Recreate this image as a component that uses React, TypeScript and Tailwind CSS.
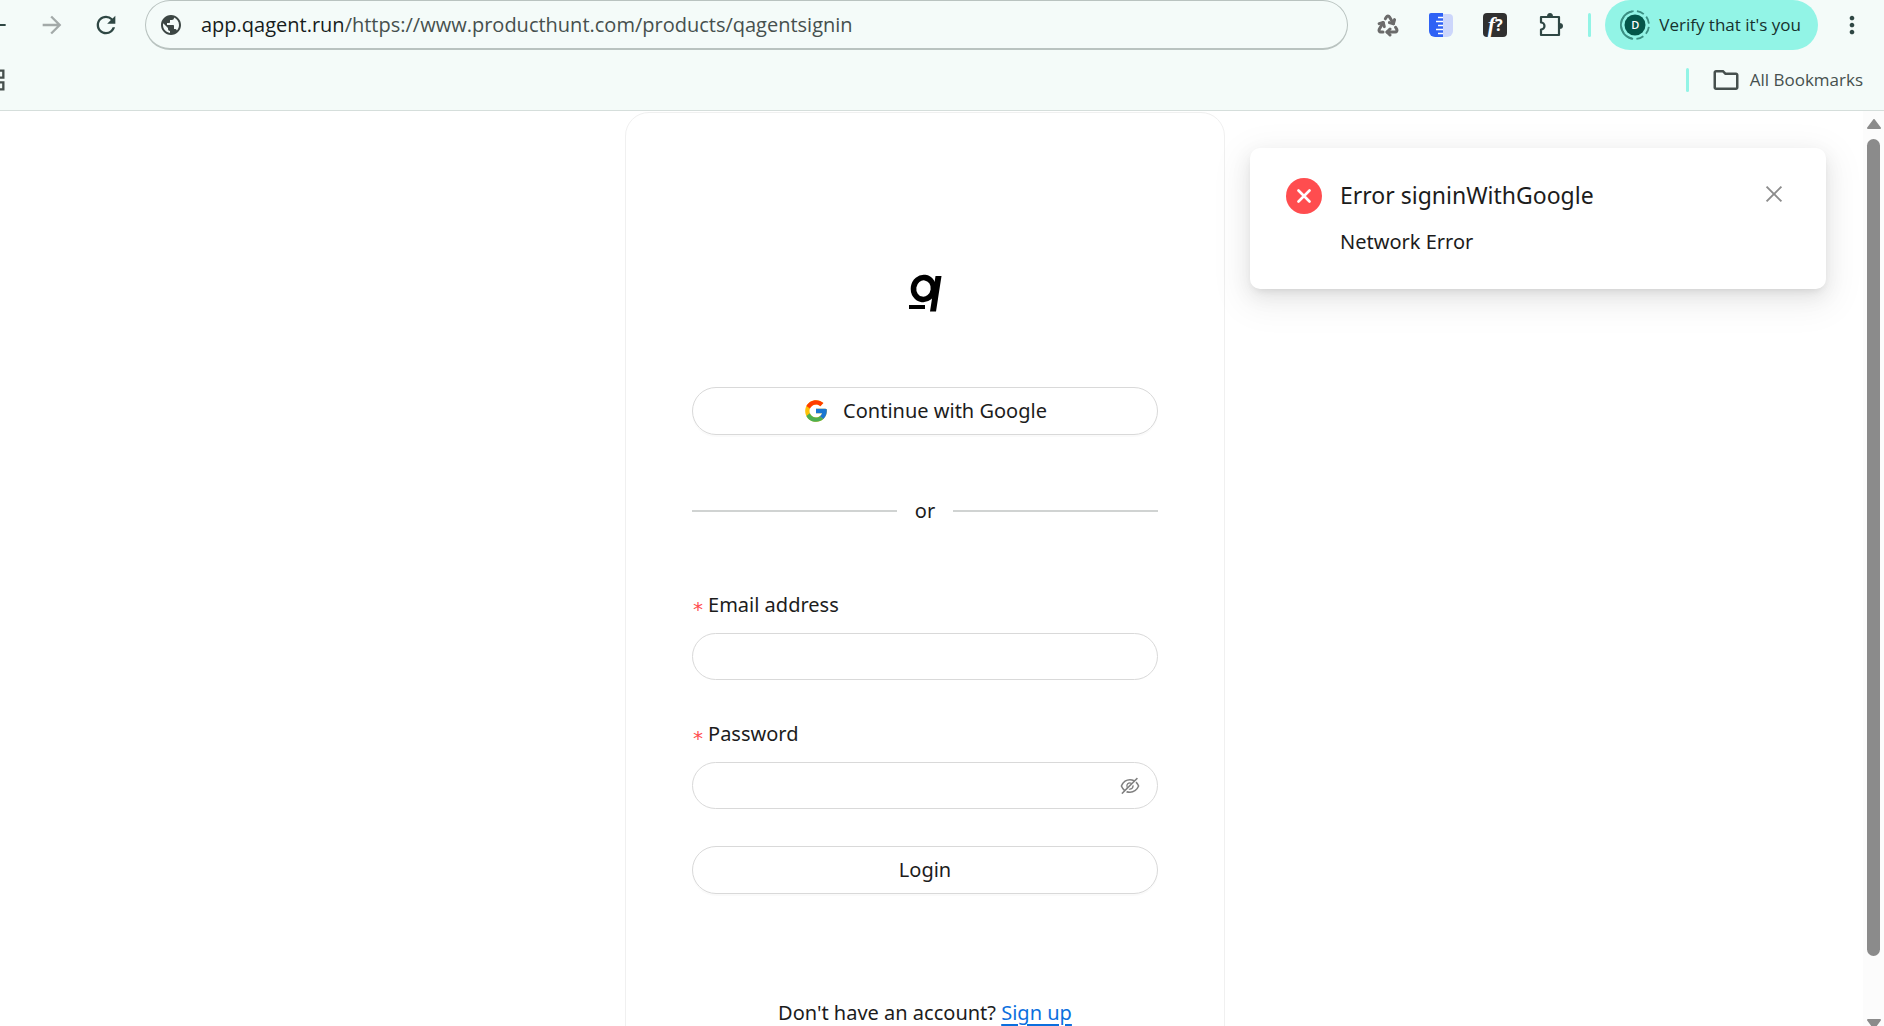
import { AiOutlineClose, AiOutlineEyeInvisible } from "react-icons/ai";
import { FcGoogle } from "react-icons/fc";
import {
  MdArrowBack,
  MdArrowForward,
  MdMoreVert,
  MdOutlineFolder,
  MdOutlineGridView,
  MdPublic,
  MdRefresh,
} from "react-icons/md";
import { Recycle } from "lucide-react";

function RulerIcon() {
  return (
    <svg viewBox="0 0 24 24" className="size-6" aria-hidden="true">
      <path d="M12 1h8a4 4 0 0 1 4 4v13a6 6 0 0 1-6 6h-6z" fill="#ccd6fb" />
      <path d="M0 2a2 2 0 0 1 2-2h12v24H6a6 6 0 0 1-6-6z" fill="#2f62f5" />
      <path d="M9 4.500h5M7 8.500h7M9 12.500h5M7 16.500h7M9 20.500h5" stroke="#fff" strokeWidth="1.300" />
    </svg>
  );
}

function PuzzleIcon() {
  return (
    <svg viewBox="0 0 24 24" className="size-6" aria-hidden="true">
      <path
        d="M2 4h18v18H2v-5.500a3.500 3.500 0 0 0 0-7z"
        fill="none"
        stroke="#2f4744"
        strokeWidth="2.200"
        strokeLinejoin="round"
      />
      <path d="M8 3.500a3 3.500 0 0 1 6 0zM20.500 10a3.500 3 0 0 1 0 6z" fill="#2f4744" />
    </svg>
  );
}

function ProfileBadge() {
  return (
    <span className="relative flex size-[30px] items-center justify-center">
      <svg viewBox="0 0 30 30" className="absolute inset-0 size-full" aria-hidden="true">
        <circle cx="15" cy="15" r="10.500" fill="#04564a" />
        <path d="M12 1.300A14 14 0 0 0 12 28.700" fill="none" stroke="#3b8f83" strokeWidth="1.800" />
        <circle
          cx="15"
          cy="15"
          r="14"
          fill="none"
          stroke="#3b8f83"
          strokeWidth="1.800"
          strokeDasharray="7.500 3.500"
          strokeDashoffset="-2"
          pathLength="88"
          transform="rotate(-90 15 15)"
        />
      </svg>
      <span className="relative text-[11px] font-semibold text-white">D</span>
    </span>
  );
}

function Toolbar() {
  return (
    <div className="flex h-[50px] items-center">
      <nav className="flex w-[145px] shrink-0 items-center text-[#2f4744]">
        <button aria-label="Back" className="-ml-4 flex w-6 shrink-0">
          <MdArrowBack className="size-[26px] shrink-0" />
        </button>
        <button aria-label="Forward" className="ml-[30px] text-[#a3aaa9]">
          <MdArrowForward className="size-7" />
        </button>
        <button aria-label="Reload" className="ml-[26px]">
          <MdRefresh className="size-7" />
        </button>
      </nav>
      <div className="relative flex h-[50px] min-w-0 flex-1 items-center rounded-full border border-b-2 border-[#b9c3c0] pl-[13px]">
        <MdPublic className="size-6 shrink-0 text-[#3c4644]" />
        <a
          href="#address"
          className="ml-[18px] truncate text-xl leading-7 text-[#46504e]"
        >
          <span className="text-[#171d1c]">app.qagent.run</span>
          /https://www.producthunt.com/products/qagentsignin
        </a>
      </div>
      <div className="ml-7 flex shrink-0 items-center">
        <button aria-label="Recycle extension">
          <Recycle className="size-6 text-[#6b6b6b]" strokeWidth={3} />
        </button>
        <button aria-label="Ruler extension" className="ml-[29px]">
          <RulerIcon />
        </button>
        <button
          aria-label="Font finder"
          className="ml-[30px] flex size-6 items-center justify-center rounded bg-[#303030] text-base leading-none font-bold text-white"
        >
          <span className="font-['Liberation_Serif',serif] text-[22px] italic">f</span>?
        </button>
        <button aria-label="Extensions" className="ml-8">
          <PuzzleIcon />
        </button>
        <span className="ml-[25px] h-6 w-[3px] rounded-full bg-[#92f4e6]" />
        <button className="ml-[14px] flex h-[50px] items-center gap-[9px] rounded-full bg-[#92f4e6] pr-[17px] pl-[15px] text-[17px] text-[#16312d]">
          <ProfileBadge />
          Verify that it's you
        </button>
        <button aria-label="Browser menu" className="mr-[18px] ml-5">
          <MdMoreVert className="size-7 text-[#2f4744]" />
        </button>
      </div>
    </div>
  );
}

function BookmarksBar() {
  return (
    <div className="flex h-[60px] items-center">
      <button aria-label="Apps" className="-ml-5 flex">
        <MdOutlineGridView className="size-7 text-[#46504e]" />
      </button>
      <span className="ml-auto h-6 w-[3px] rounded-full bg-[#92f4e6]" />
      <button className="mr-[21px] ml-[22px] flex items-center gap-[9px] text-[17px] text-[#46504e]">
        <MdOutlineFolder className="size-[30px]" />
        All Bookmarks
      </button>
    </div>
  );
}

function Logo() {
  return (
    <svg viewBox="0 0 34 38" className="h-[38px] w-[34px]" aria-label="q" role="img">
      <ellipse cx="15.500" cy="14.500" rx="10" ry="11" fill="none" stroke="#000" strokeWidth="5.600" transform="rotate(8 15.500 14.500)" />
      <path d="M27.500 2h6L28 37.500h-6z" />
      <path d="M1 31h16v4H1z" />
    </svg>
  );
}

function Field({ id, label, type }: { id: string; label: string; type: string }) {
  return (
    <div>
      <label htmlFor={id} className="flex h-8 items-center gap-1">
        <span
          className="pt-2 font-['DejaVu_Sans_Mono',monospace] leading-6 text-[#ff4d4f]"
          aria-hidden="true"
        >
          *
        </span>
        {label}
      </label>
      <div className="mt-3 flex h-[47px] items-center rounded-full border border-[#d9d9d9] px-4">
        <input id={id} type={type} required className="min-w-0 flex-1 bg-transparent outline-none" />
        {type === "password" && (
          <button type="button" aria-label="Show password">
            <AiOutlineEyeInvisible className="size-[22px] text-[#808080]" />
          </button>
        )}
      </div>
    </div>
  );
}

function Divider() {
  return (
    <div className="flex items-center">
      <span className="h-0.5 flex-1 bg-[#d0d3d2]" />
      <span className="px-[18px] leading-8">or</span>
      <span className="h-0.5 flex-1 bg-[#d0d3d2]" />
    </div>
  );
}

function SignInCard() {
  return (
    <form
      onSubmit={(e) => e.preventDefault()}
      className="mt-px flex w-[600px] shrink-0 flex-col rounded-[24px] border border-[#f0f0f0] px-[66px] pt-[161px] pb-16"
    >
      <div className="flex justify-center">
        <Logo />
      </div>
      <button
        type="button"
        className="mt-[75px] flex h-12 items-center justify-center gap-[14px] rounded-full border border-[#d9d9d9] shadow-[0_2px_0_rgba(0,0,0,0.02)]"
      >
        <FcGoogle className="size-[26px]" />
        Continue with Google
      </button>
      <div className="mt-[60px] mb-[62px]">
        <Divider />
      </div>
      <div className="flex flex-col gap-[38px]">
        <Field id="email" label="Email address" type="email" />
        <Field id="password" label="Password" type="password" />
      </div>
      <button
        type="submit"
        className="mt-[37px] h-12 rounded-full border border-[#d9d9d9] shadow-[0_2px_0_rgba(0,0,0,0.02)]"
      >
        Login
      </button>
      <p className="mt-[103px] text-center leading-8">
        Don't have an account?{" "}
        <a href="#signup" className="text-[#0b6fde] underline underline-offset-4">
          Sign up
        </a>
      </p>
    </form>
  );
}

function ErrorNotice() {
  return (
    <div
      role="alert"
      className="absolute top-[37px] right-[58px] flex min-h-[141px] w-[576px] items-start rounded-[10px] bg-white px-9 pt-[30px] shadow-[0_7px_20px_rgba(0,0,0,0.08),0_4px_8px_-4px_rgba(0,0,0,0.12),0_10px_34px_10px_rgba(0,0,0,0.05)]"
    >
      <span className="flex size-9 shrink-0 items-center justify-center rounded-full bg-[#ff4d4f]">
        <svg viewBox="0 0 14 14" className="size-[14px]" aria-hidden="true">
          <path d="M1.500 1.500l11 11M12.500 1.500l-11 11" stroke="#fff" strokeWidth="2.600" strokeLinecap="round" />
        </svg>
      </span>
      <div className="ml-[18px] min-w-0 flex-1">
        <h2 className="text-[23px] leading-[34px]">Error signinWithGoogle</h2>
        <p className="mt-[14px] leading-8">Network Error</p>
      </div>
      <button aria-label="Dismiss" className="mt-1 mr-1">
        <AiOutlineClose className="size-6 text-[#8c8c8c]" />
      </button>
    </div>
  );
}

function Scrollbar() {
  return (
    <div className="flex w-[21px] shrink-0 flex-col items-center bg-[#fcfcfc] pt-2" aria-hidden="true">
      <svg viewBox="0 0 14 10" className="h-[10px] w-[14px] shrink-0">
        <path d="M7 1l6 8H1z" fill="#8b8b8b" stroke="#8b8b8b" strokeWidth="2" strokeLinejoin="round" />
      </svg>
      <span className="mt-[10px] mb-[63px] w-[13px] flex-1 rounded-full bg-[#8b8b8b]" />
      <svg viewBox="0 0 14 7" className="h-[7px] w-[14px] shrink-0">
        <path d="M1 1h12L7 9z" fill="#8b8b8b" stroke="#8b8b8b" strokeWidth="2" strokeLinejoin="round" />
      </svg>
    </div>
  );
}

export default function App() {
  return (
    <div className="flex h-screen flex-col overflow-hidden bg-white font-['Noto_Sans',sans-serif]">
      <header className="shrink-0 border-b border-[#d5dedb] bg-[#f4fbf9] font-['Open_Sans','Noto_Sans',sans-serif]">
        <Toolbar />
        <BookmarksBar />
      </header>
      <div className="relative flex min-h-0 flex-1">
        <main className="flex min-w-0 flex-1 items-start justify-center overflow-hidden pr-[13px] text-xl text-[#1c1c1c]">
          <SignInCard />
          <ErrorNotice />
        </main>
        <Scrollbar />
      </div>
    </div>
  );
}
